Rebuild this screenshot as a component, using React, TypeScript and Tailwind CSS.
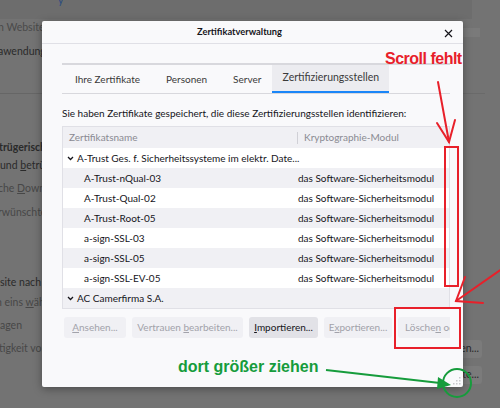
import React from "react";

const rows: { name: string; mod: string; group?: boolean }[] = [
  { name: "A-Trust Ges. f. Sicherheitssysteme im elektr. Date...", mod: "", group: true },
  { name: "A-Trust-nQual-03", mod: "das Software-Sicherheitsmodul" },
  { name: "A-Trust-Qual-02", mod: "das Software-Sicherheitsmodul" },
  { name: "A-Trust-Root-05", mod: "das Software-Sicherheitsmodul" },
  { name: "a-sign-SSL-03", mod: "das Software-Sicherheitsmodul" },
  { name: "a-sign-SSL-05", mod: "das Software-Sicherheitsmodul" },
  { name: "a-sign-SSL-EV-05", mod: "das Software-Sicherheitsmodul" },
  { name: "AC Camerfirma S.A.", mod: "", group: true },
];

function Chevron() {
  return (
    <svg width="7" height="5" viewBox="0 0 7 5" className="mr-[3px] shrink-0">
      <path d="M1 1 L3.5 3.5 L6 1" fill="none" stroke="#15141a" strokeWidth="1.3" />
    </svg>
  );
}

export default function App() {
  return (
    <div className="relative w-[500px] h-[408px] overflow-hidden bg-[#737373] font-['Lato',sans-serif] text-[10.5px] text-[#2a2a2a]">
      {/* dimmed background page */}
      <div className="flex flex-col">
        <div className="h-[19px] flex">
          <div className="w-[472px] h-[19px] bg-[#6d6d6d] pl-[58px] text-[#2a4a80] leading-[6px]">
            <span className="relative top-[-3px]">y</span>
          </div>
        </div>
        <div className="flex">
          <div className="flex flex-col w-[200px] whitespace-nowrap leading-[16px]">
            <div className="h-[16px] text-[#4a4a4a] ml-[-2px]">n Websites</div>
            <div className="h-[16px] mt-[8px] ml-[-2px]">awendung</div>
            <div className="h-px mt-[34px] bg-[#666666] w-[60px]"></div>
            <div className="h-[16px] mt-[45px] font-bold ml-[-1px]">trügerische</div>
            <div className="h-[16px] mt-[2px]">
              <span>und <span className="underline">b</span>etrügerische</span>
            </div>
            <div className="h-[16px] mt-[7px] text-[#474747] ml-[-2px]">
              <span>che <span className="underline">D</span>ownloads</span>
            </div>
            <div className="h-[16px] mt-[8px] text-[#474747] ml-[-2px]">rwünschter</div>
            <div className="h-[16px] mt-[54px]">site nach dem</div>
            <div className="h-[16px] mt-[4px] text-[#474747] ml-[-4px]">
              <span>n eins <span className="underline">w</span>ählen</span>
            </div>
            <div className="h-[16px] mt-[7px] text-[#474747]">agen</div>
            <div className="h-[16px] mt-[7px] text-[#474747] ml-[-1px]">tigkeit von</div>
          </div>
          <div className="ml-auto w-[100px] flex flex-col">
            <div className="mt-[9px] h-[9px] w-[80px] bg-[#7a7a7a]"></div>
            <div className="mt-[56px] h-px w-[85px] bg-[#6a6a6a]"></div>
            <div className="mt-[246px] h-[18px] w-[82px] rounded-[3px] bg-[#7b7b7b] pr-[3px] flex items-center justify-end whitespace-nowrap overflow-hidden">
              <span className="shrink-0">Zertifikate anzeigen...</span>
            </div>
            <div className="mt-[8px] h-[18px] w-[82px] rounded-[3px] bg-[#7b7b7b] pr-[3px] flex items-center justify-end whitespace-nowrap overflow-hidden">
              <span className="shrink-0">Kryptographie-Geräte...</span>
            </div>
          </div>
        </div>
      </div>

      {/* dialog window */}
      <div className="absolute left-[42px] top-[21px] w-[421px] h-[366px] bg-[#f9f9fb] rounded-[2px] shadow-[0_2px_8px_rgba(0,0,0,0.35)] flex flex-col text-[#15141a] text-[10px]">
        <div className="relative h-[23px] border-b border-[#e0e0e6] flex items-center">
          <div className="ml-[155px] font-bold text-[9.3px]">Zertifikatverwaltung</div>
          <svg width="9" height="9" viewBox="0 0 9 9" className="absolute right-[10px] top-[8px]">
            <path d="M1 1 L8 8 M8 1 L1 8" stroke="#15141a" strokeWidth="1.2" />
          </svg>
        </div>
        <div className="flex flex-col pl-[20px] pr-[13px]">
          {/* tabs */}
          <div className="mt-[19px] border-t-2 border-[#d8d8dd] border-b h-[31px] flex text-[#3a3a3a] whitespace-nowrap">
            <div className="px-[13px] flex items-center">Ihre Zertifikate</div>
            <div className="px-[13px] flex items-center">Personen</div>
            <div className="pl-[13px] pr-[11px] flex items-center">Server</div>
            <div className="w-[117px] flex items-center justify-center bg-[#ececf0] border-b-2 border-[#1a86f8] text-[10.5px]">Zertifizierungsstellen</div>
          </div>
          <div className="mt-[11px] leading-[16px] whitespace-nowrap">
            Sie haben Zertifikate gespeichert, die diese Zertifizierungsstellen identifizieren:
          </div>
          {/* table */}
          <div className="mt-[5px] border border-[#e0e0e6] bg-white">
            <div className="h-[21px] bg-[#f0f0f4] flex items-center text-[#8a8a92]">
              <div className="w-[234px] pl-[6px]">Zertifikatsname</div>
              <div className="h-[12px] w-px bg-[#d0d0d6]"></div>
              <div className="pl-[6px]">Kryptographie-Modul</div>
            </div>
            {rows.map((r, i) => (
              <div
                key={i}
                className={`h-[20px] flex items-center whitespace-nowrap ${i % 2 === 1 ? "bg-[#f0f0f4]" : "bg-white"}`}
              >
                {r.group ? (
                  <div className="flex items-center pl-[4px]">
                    <Chevron />
                    <span>{r.name}</span>
                  </div>
                ) : (
                  <>
                    <div className="w-[235px] pl-[21px]">{r.name}</div>
                    <div>{r.mod}</div>
                  </>
                )}
              </div>
            ))}
          </div>
          {/* buttons */}
          <div className="mt-[8px] ml-[2px] flex gap-[6px] whitespace-nowrap overflow-hidden">
            <div className="h-[21px] w-[62px] shrink-0 rounded-[3px] bg-[#f0f0f4] text-[#a2a2aa] flex items-center justify-center">
              <span><span className="underline">A</span>nsehen...</span>
            </div>
            <div className="h-[21px] w-[111px] shrink-0 rounded-[3px] bg-[#f0f0f4] text-[#a2a2aa] flex items-center justify-center">
              <span>Vertrauen <span className="underline">b</span>earbeiten...</span>
            </div>
            <div className="h-[21px] w-[69px] shrink-0 rounded-[3px] bg-[#e2e2e7] text-[#15141a] flex items-center justify-center">
              <span><span className="underline">I</span>mportieren...</span>
            </div>
            <div className="h-[21px] w-[68px] shrink-0 rounded-[3px] bg-[#f0f0f4] text-[#a2a2aa] flex items-center justify-center">
              <span>E<span className="underline">x</span>portieren...</span>
            </div>
            <div className="h-[21px] px-[7px] shrink-0 rounded-l-[3px] bg-[#f0f0f4] text-[#a2a2aa] flex items-center">
              <span>Lösche<span className="underline">n</span> oder Vertrauen entziehen...</span>
            </div>
          </div>
        </div>
        {/* resize grip */}
        <svg width="8" height="8" viewBox="0 0 8 8" className="absolute right-[2px] bottom-[2px]">
          <g fill="#c8c8cc">
            <rect x="6" y="0" width="1.5" height="1.5" />
            <rect x="3" y="3" width="1.5" height="1.5" />
            <rect x="6" y="3" width="1.5" height="1.5" />
            <rect x="0" y="6" width="1.5" height="1.5" />
            <rect x="3" y="6" width="1.5" height="1.5" />
            <rect x="6" y="6" width="1.5" height="1.5" />
          </g>
        </svg>
      </div>

      {/* annotations */}
      <div className="absolute left-[385px] top-[49px] font-['Liberation_Sans',sans-serif] font-bold text-[16px] tracking-[-0.5px] text-[#e8202a] whitespace-nowrap leading-[20px]">
        Scroll fehlt
      </div>
      <div className="absolute left-[178px] top-[357px] font-['Liberation_Sans',sans-serif] font-bold text-[16px] text-[#169c3c] whitespace-nowrap leading-[20px]">
        dort größer ziehen
      </div>
      <svg className="absolute left-0 top-0 pointer-events-none" width="500" height="408" viewBox="0 0 500 408">
        <g stroke="#e8202a" strokeWidth="2" fill="none" strokeLinecap="round">
          <rect x="445" y="147" width="13" height="139" />
          <rect x="395" y="308" width="65" height="40" />
          <path d="M438 82 L449 142" />
          <path d="M437 123 L449 142 L455 120" />
          <path d="M506 266 L456 301" />
          <path d="M483 303 L456 301 L465 277" />
        </g>
        <g stroke="#169c3c" strokeWidth="2" fill="none">
          <path d="M326 370 L440 383" />
          <circle cx="457" cy="383" r="14" />
        </g>
        <path d="M451 385 L438 377 L437 389 Z" fill="#169c3c" />
      </svg>
    </div>
  );
}
